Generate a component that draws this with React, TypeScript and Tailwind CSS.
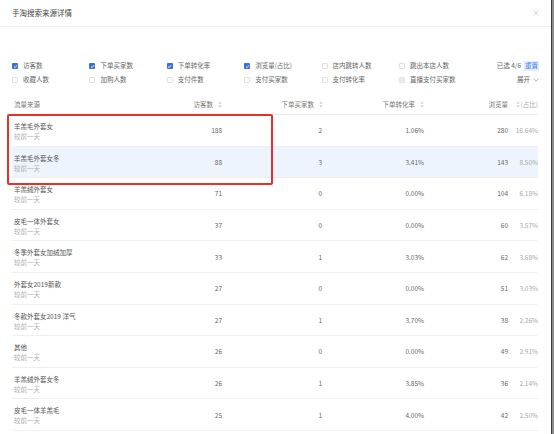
import { X } from "lucide-react";

const options = [
    { label: "访客数", checked: true },
    { label: "下单买家数", checked: true },
    { label: "下单转化率", checked: true },
    { label: "浏览量(占比)", checked: true },
    { label: "店内跳转人数" },
    { label: "跳出本店人数" },
    { label: "收藏人数" },
    { label: "加购人数" },
    { label: "支付件数" },
    { label: "支付买家数" },
    { label: "支付转化率" },
    { label: "直播支付买家数", disabled: true },
];

const rows = [
    { name: "羊羔毛外套女", uv: 188, buyers: 2, rate: "1.06%", pv: 280, share: "16.64%" },
    { name: "羊羔毛外套女冬", uv: 88, buyers: 3, rate: "3.41%", pv: 143, share: "8.50%" },
    { name: "羊羔绒外套女", uv: 71, buyers: 0, rate: "0.00%", pv: 104, share: "6.18%" },
    { name: "皮毛一体外套女", uv: 37, buyers: 0, rate: "0.00%", pv: 60, share: "3.57%" },
    { name: "冬季外套女加绒加厚", uv: 33, buyers: 1, rate: "3.03%", pv: 62, share: "3.68%" },
    { name: "外套女2019新款", uv: 27, buyers: 0, rate: "0.00%", pv: 51, share: "3.03%" },
    { name: "冬款外套女2019 洋气", uv: 27, buyers: 1, rate: "3.70%", pv: 38, share: "2.26%" },
    { name: "其他", uv: 26, buyers: 0, rate: "0.00%", pv: 49, share: "2.91%" },
    { name: "羊羔绒外套女冬", uv: 26, buyers: 1, rate: "3.85%", pv: 36, share: "2.14%" },
    { name: "皮毛一体羊羔毛", uv: 25, buyers: 1, rate: "4.00%", pv: 42, share: "2.50%" },
];

function SortIcon() {
    return (
        <svg width="4" height="7" viewBox="0 0 4 7" className="ml-[5px] shrink-0">
            <path d="M2 0.5 L3.6 2.6 L0.4 2.6 Z" fill="#c4c4c4" />
            <path d="M2 6.5 L3.6 4.4 L0.4 4.4 Z" fill="#c4c4c4" />
        </svg>
    );
}

function Checkbox({ checked, disabled }: { checked?: boolean; disabled?: boolean }) {
    if (checked) {
        return (
            <span className="w-[6px] h-[6px] rounded-[1px] bg-[#3a6fd9] flex items-center justify-center shrink-0">
                <svg width="5" height="5" viewBox="0 0 5 5">
                    <path d="M1 2.6 L2.1 3.6 L4 1.3" stroke="white" strokeWidth="0.9" fill="none" />
                </svg>
            </span>
        );
    }
    return (
        <span
            className={`w-[6px] h-[6px] rounded-[1px] border shrink-0 ${disabled ? 'bg-[#ececec] border-[#e4e4e4]' : 'bg-white border-[#e0e0e0]'}`}
        />
    );
}

export default function App() {
    return (
        <div className="flex w-[554px] h-[434px] overflow-hidden bg-white font-['Noto_Sans_CJK_SC','Liberation_Sans',sans-serif]">
            <div className="relative flex-1 min-w-0 flex flex-col">
                {/* header */}
                <div className="h-[27px] border-b border-[#f0f0f0] flex items-center justify-between pl-3 pr-[11px]">
                    <span className="text-[7.5px] text-[#444]">手淘搜索来源详情</span>
                    <X size={8} strokeWidth={1.3} className="text-[#a0a0a0]" />
                </div>

                {/* column options */}
                <div className="flex pl-3 pr-[12px] pt-[32px] text-[6.5px] text-[#666]">
                    <div className="grid grid-cols-[repeat(6,77.4px)] shrink-0">
                        {options.map((o) => (
                            <div key={o.label} className="h-[14px] flex items-center gap-[5px]">
                                <Checkbox checked={o.checked} disabled={o.disabled} />
                                <span>{o.label}</span>
                            </div>
                        ))}
                    </div>
                    <div className="flex-1 min-w-0 flex flex-col items-end whitespace-nowrap">
                        <div className="h-[14px] flex items-center">
                            已选 4/6
                            <span className="ml-[3px] px-[1px] bg-[#e3ecfc] text-[#3d7bf5]">重置</span>
                        </div>
                        <div className="h-[14px] flex items-center">
                            展开
                            <svg width="6" height="4" viewBox="0 0 6 4" className="ml-[3px]">
                                <path d="M0.5 0.8 L3 3.2 L5.5 0.8" stroke="#999" strokeWidth="0.8" fill="none" />
                            </svg>
                        </div>
                    </div>
                </div>

                {/* table */}
                <div className="relative mt-[8px] ml-3 mr-[13px] text-[6.5px]">
                    <div className="h-[20px] border-b border-[#ededed] grid grid-cols-[110px_100px_101px_101px_1fr] items-center text-[#777]">
                        <div className="pl-[2px]">流量来源</div>
                        <div className="flex items-center justify-end">访客数<SortIcon /></div>
                        <div className="flex items-center justify-end">下单买家数<SortIcon /></div>
                        <div className="flex items-center justify-end">下单转化率<SortIcon /></div>
                        <div className="flex items-center justify-end">
                            浏览量
                            <div className="w-[30px] flex items-center justify-end text-[#aaa]">
                                <SortIcon />
                                <span className="ml-[1px]">(占比)</span>
                            </div>
                        </div>
                    </div>

                    {rows.map((r, i) => (
                        <div
                            key={r.name}
                            className={`h-[31.6px] pt-[1.5px] border-b border-[#efefef] grid grid-cols-[110px_100px_101px_101px_1fr] items-center text-[#666] ${i === 1 ? 'bg-[#eef4fd]' : ''}`}
                        >
                            <div className="pl-[2px] leading-[10px]">
                                <div className="text-[#555]">{r.name}</div>
                                <div className="text-[#b0b0b0]">较前一天</div>
                            </div>
                            <div className="text-right">{r.uv}</div>
                            <div className="text-right pr-[1px]">{r.buyers}</div>
                            <div className="text-right">{r.rate}</div>
                            <div className="flex justify-end">
                                <span>{r.pv}</span>
                                <span className="w-[30px] text-right text-[#aaa]">{r.share}</span>
                            </div>
                        </div>
                    ))}

                    {/* annotation */}
                    <div className="absolute left-[-5px] top-[19px] w-[266px] h-[71px] border-2 border-[#e8302a] rounded-[2px]" />
                </div>
            </div>
            <div className="w-px bg-[#3d3d3d]" />
            <div className="w-[2px] bg-[#8c8c8c]" />
        </div>
    );
}
